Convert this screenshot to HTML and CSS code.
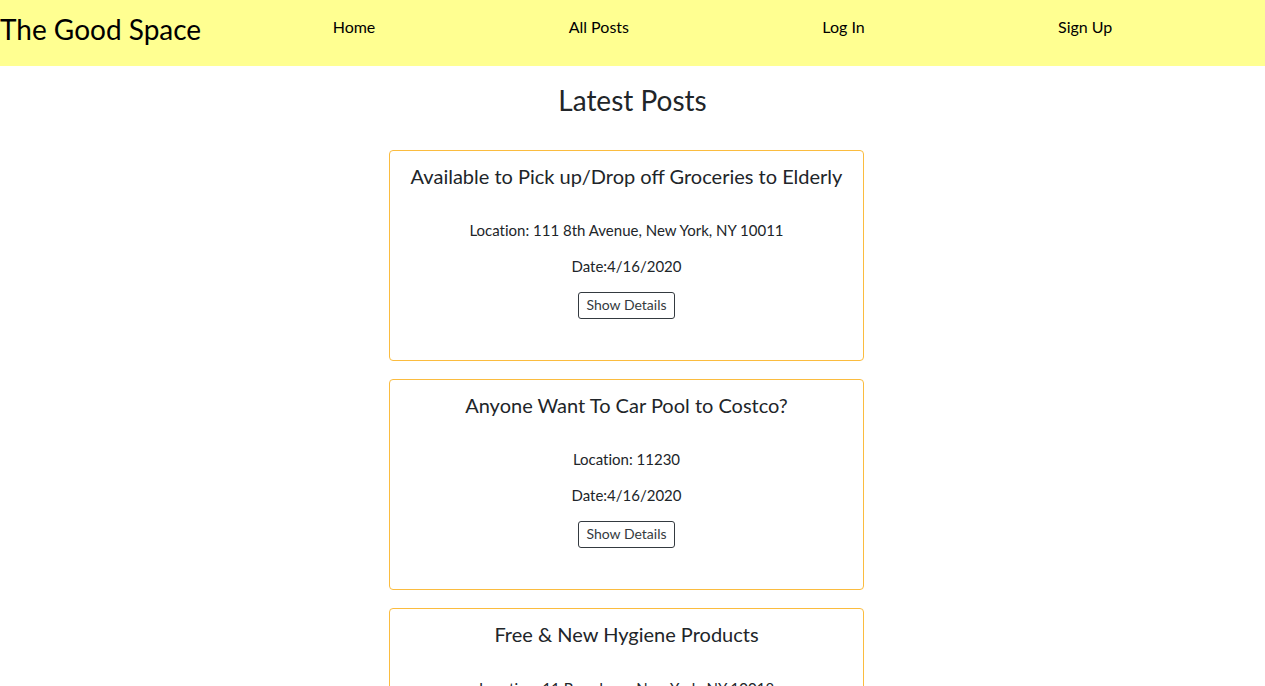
FILE: index.html
```html
<!DOCTYPE html>
<html lang="en">
<head>
<meta charset="utf-8">
<meta name="viewport" content="width=device-width, initial-scale=1">
<title>The Good Space</title>
<link rel="stylesheet" href="styles.css">
</head>
<body>
<header class="navbar">
  <a class="brand" href="#">The Good Space</a>
  <nav class="nav-links">
    <a href="#">Home</a>
    <a href="#">All Posts</a>
    <a href="#">Log In</a>
    <a href="#">Sign Up</a>
  </nav>
</header>
<main class="page">
  <h1 class="page-title">Latest Posts</h1>
  <div class="posts">
    <article class="card">
      <h2 class="card-title">Available to Pick up/Drop off Groceries to Elderly</h2>
      <p class="card-text">Location: 111 8th Avenue, New York, NY 10011</p>
      <p class="card-text">Date:4/16/2020</p>
      <button class="btn" type="button">Show Details</button>
    </article>
    <article class="card">
      <h2 class="card-title">Anyone Want To Car Pool to Costco?</h2>
      <p class="card-text">Location: 11230</p>
      <p class="card-text">Date:4/16/2020</p>
      <button class="btn" type="button">Show Details</button>
    </article>
    <article class="card">
      <h2 class="card-title">Free &amp; New Hygiene Products</h2>
      <p class="card-text">Location: 11 Broadway, New York, NY 10018</p>
      <p class="card-text">Date:4/16/2020</p>
      <button class="btn" type="button">Show Details</button>
    </article>
  </div>
</main>
</body>
</html>
```
FILE: styles.css
```css
* {
  box-sizing: border-box;
}

body {
  margin: 0;
  background: #fff;
  color: #212529;
  font-family: Lato, "Open Sans", sans-serif;
  font-size: 15px;
  line-height: 20px;
}

.navbar {
  display: flex;
  align-items: flex-start;
  padding-bottom: 20px;
  background: #ffff91;
}

.navbar a {
  color: #000;
  text-decoration: none;
}

.brand {
  flex: none;
  width: 236px;
  padding-top: 12px;
  font-size: 28px;
  line-height: 34px;
  white-space: nowrap;
}

.nav-links {
  display: flex;
  flex: 1;
  justify-content: space-around;
  padding: 17px 56px 0 0;
  font-size: 16px;
}

.page {
  padding-bottom: 18px;
}

.page-title {
  margin: 0;
  padding: 17px 0 33px;
  font-size: 28px;
  font-weight: 400;
  line-height: 34px;
  text-align: center;
}

.posts {
  display: flex;
  flex-direction: column;
  gap: 18px;
  width: 487px;
  max-width: 100%;
  margin: 0 auto;
  padding-right: 12px;
}

.card {
  padding: 12px 20px 41px;
  border: 1px solid #fbbc3f;
  border-radius: 4px;
  text-align: center;
}

.card-title {
  margin: 0 0 31px;
  font-size: 20px;
  font-weight: 400;
  line-height: 26px;
}

.card-text {
  margin: 0 0 16px;
  font-variant-ligatures: none;
}

.btn {
  height: 27px;
  padding: 0 7px 2px;
  border: 1px solid #343a40;
  border-radius: 3px;
  background: #fff;
  color: #343a40;
  font: inherit;
  font-size: 14px;
}
```
